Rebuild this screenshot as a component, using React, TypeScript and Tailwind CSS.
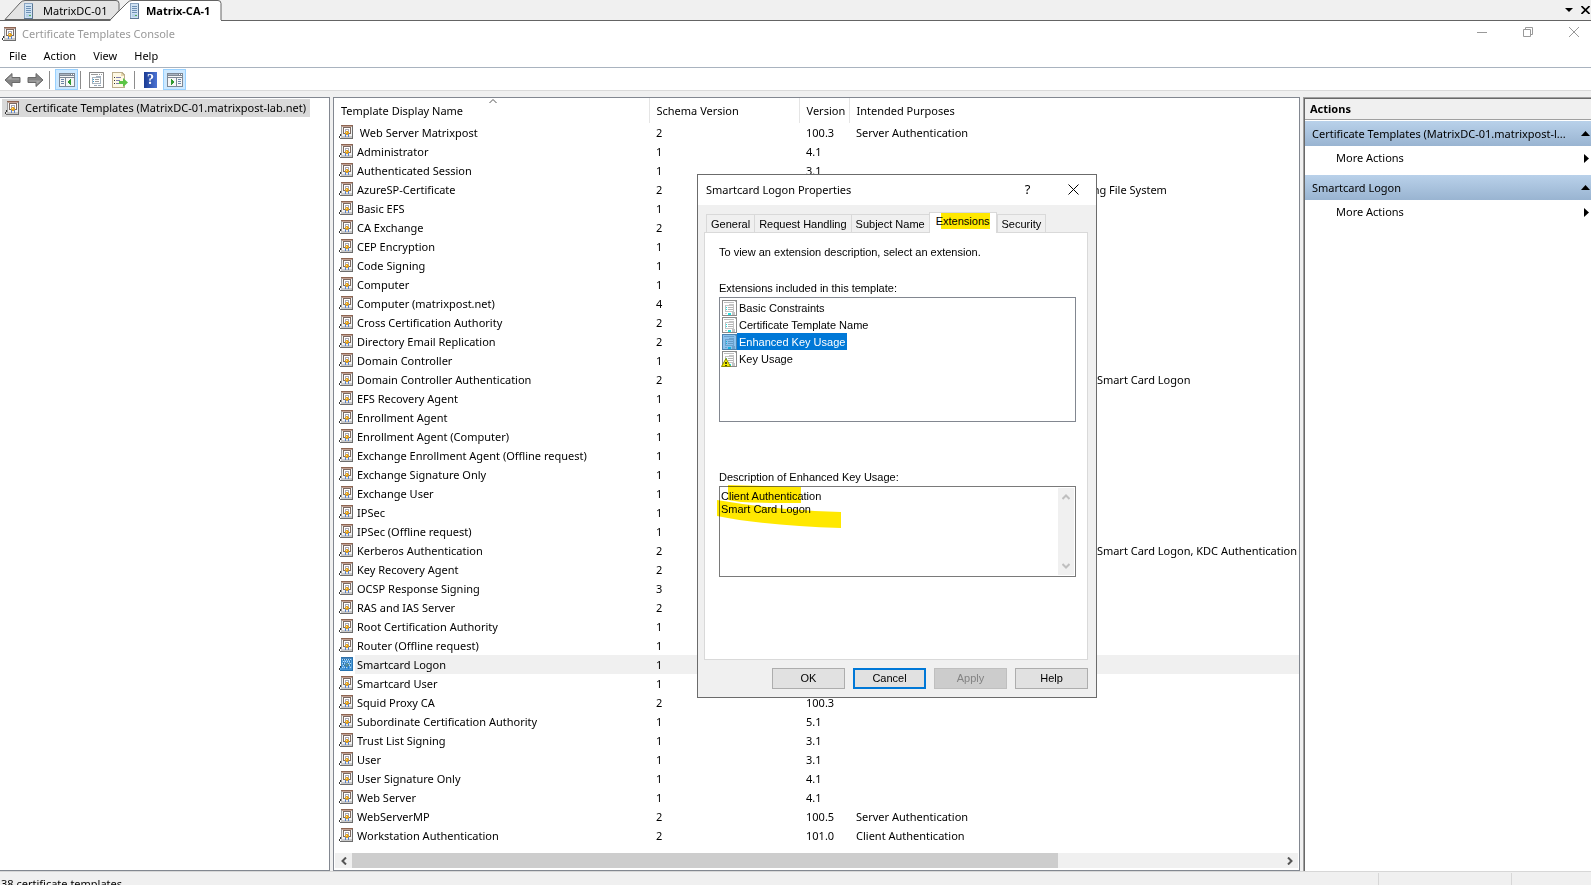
import type { ReactNode } from 'react'

type Template = [name: string, schema: number, version?: string, purposes?: string]

const templates: Template[] = [
  ['\u00a0Web Server Matrixpost', 2, '100.3', 'Server Authentication'],
  ['Administrator', 1, '4.1'],
  ['Authenticated Session', 1, '3.1'],
  ['AzureSP-Certificate', 2, '', 'Client Authentication, Secure Email,\u00a0\u00a0\u00a0 Encrypting File System'],
  ['Basic EFS', 1],
  ['CA Exchange', 2],
  ['CEP Encryption', 1],
  ['Code Signing', 1],
  ['Computer', 1],
  ['Computer (matrixpost.net)', 4],
  ['Cross Certification Authority', 2],
  ['Directory Email Replication', 2],
  ['Domain Controller', 1],
  ['Domain Controller Authentication', 2, '', 'Client Authentication, Server Authentication,\u00a0\u00a0\u00a0 Smart Card Logon'],
  ['EFS Recovery Agent', 1],
  ['Enrollment Agent', 1],
  ['Enrollment Agent (Computer)', 1],
  ['Exchange Enrollment Agent (Offline request)', 1],
  ['Exchange Signature Only', 1],
  ['Exchange User', 1],
  ['IPSec', 1],
  ['IPSec (Offline request)', 1],
  ['Kerberos Authentication', 2, '', 'Client Authentication, Server Authentication,\u00a0\u00a0\u00a0 Smart Card Logon, KDC Authentication'],
  ['Key Recovery Agent', 2],
  ['OCSP Response Signing', 3],
  ['RAS and IAS Server', 2],
  ['Root Certification Authority', 1],
  ['Router (Offline request)', 1],
  ['Smartcard Logon', 1],
  ['Smartcard User', 1],
  ['Squid Proxy CA', 2, '100.3'],
  ['Subordinate Certification Authority', 1, '5.1'],
  ['Trust List Signing', 1, '3.1'],
  ['User', 1, '3.1'],
  ['User Signature Only', 1, '4.1'],
  ['Web Server', 1, '4.1'],
  ['WebServerMP', 2, '100.5', 'Server Authentication'],
  ['Workstation Authentication', 2, '101.0', 'Client Authentication'],
]

const selected = 'Smartcard Logon'

function TemplateIcon({ active = false }: { active?: boolean }) {
  return (
    <svg width="14" height="14" viewBox="0 0 14 14" shapeRendering="crispEdges" className="shrink-0">
      <path d="M2 0h12v14H2z" fill="#9c9c9c" />
      <path d="M2 0h12v1H2z" fill="#8d6552" />
      <path d="M3 1h10v1H3z" fill="#c4a193" />
      <path d="M3 2h10v10H3z" fill="#f1f1f1" />
      <path d="M2 11h11v2H2z" fill="#c9c9c9" />
      <path d="M13 1h1v13h-1zM1 13h13v1H1z" fill="#6c6c6c" />
      <path d="M1 9h1v2H1zM0 11h1v2H0z" fill="#333" />
      <path d="M4 2h8v7H4z" fill="#7b6a62" />
      <path d="M5 3h6v5H5z" fill="#fff" />
      <path d="M6 4h4v3H6z" fill="#a8a8b4" />
      <path d="M7 5h2v1H7z" fill="#fff" />
      <path d="M7 6h2v1h1v2H9v1H7V9H6V7h1z" fill="#e0a020" />
      <path d="M7 7h1v1H7z" fill="#ffe28a" />
      <path d="M6 9h1v3H6zM9 9h1v3H9z" fill="#5b82c8" />
      {active && (
        <>
          <path d="M2 0h12v14H1v-4h1z" fill="#0078d7" opacity=".65" />
          <path d="M3 2h1v1H3zM5 2h1v1H5zM7 2h1v1H7zM9 2h1v1H9zM11 2h1v1h-1zM4 4h1v1H4zM6 4h1v1H6zM8 4h1v1H8zM10 4h1v1h-1zM3 6h1v1H3zM5 6h1v1H5zM9 6h1v1H9zM11 6h1v1h-1zM4 8h1v1H4zM10 8h1v1h-1zM3 10h1v1H3zM5 10h1v1H5zM7 10h1v1H7zM11 10h1v1h-1z" fill="#b8dcf6" />
        </>
      )}
    </svg>
  )
}

function ServerIcon() {
  return (
    <svg width="10" height="16" viewBox="0 0 10 16" shapeRendering="crispEdges" className="shrink-0">
      <path d="M0 0h9v16H0z" fill="#8aa5c2" />
      <path d="M8 1h1v15H0v-1h8z" fill="#5d7893" />
      <path d="M1 1h7v14H1z" fill="#cfe2f3" />
      <path d="M2 3h5v1H2zM2 5h5v1H2zM2 7h5v1H2zM2 9h5v1H2z" fill="#6d90b5" />
      <path d="M2 11h5v3H2z" fill="#b4cfe8" />
      <path d="M5 12h2v1H5z" fill="#4fb04f" />
    </svg>
  )
}

function ArrowIcon({ flip = false }: { flip?: boolean }) {
  return (
    <svg width="17" height="16" viewBox="0 0 17 16" className={flip ? 'rotate-180' : ''}>
      <path d="M1 8l7-6.500v4h8v5H8v4z" fill="#858585" stroke="#6a6a6a" />
      <path d="M3 7.500L7.500 3.500v3H15v1z" fill="#a8a8a8" />
    </svg>
  )
}

function PaneIcon({ right = false }: { right?: boolean }) {
  return (
    <svg width="16" height="14" viewBox="0 0 16 14" shapeRendering="crispEdges">
      <path d="M0 0h16v14H0z" fill="#7d8794" />
      <path d="M1 3h14v1H1zM1 5h14v8H1z" fill="#f6f6f6" />
      <path d="M1 1h10v1H1z" fill="#aab4c0" />
      <path d="M12 1h1v1h-1zM14 1h1v1h-1z" fill="#fff" />
      {right ? (
        <>
          <path d="M9 5h1v8H9z" fill="#7d8794" />
          <path d="M11 6h3v1h-3zM11 8h3v1h-3zM11 10h3v1h-3z" fill="#6d86a8" />
          <path d="M4 6h1v1h1v1h1v2H6v1H5v1H4z" fill="#2f9a2f" />
        </>
      ) : (
        <>
          <path d="M6 5h1v8H6z" fill="#7d8794" />
          <path d="M2 6h3v1H2zM2 8h3v1H2zM2 10h3v1H2z" fill="#6d86a8" />
          <path d="M12 6h-1v1h-1v1H9v2h1v1h1v1h1z" fill="#2f9a2f" />
        </>
      )}
    </svg>
  )
}

function PropertiesIcon() {
  return (
    <svg width="15" height="16" viewBox="0 0 15 16" shapeRendering="crispEdges">
      <path d="M0 0h15v16H0z" fill="#8b8b8b" />
      <path d="M1 1h13v14H1z" fill="#fff" />
      <path d="M2 2h7v1H2zM10 2h1v1h-1zM12 2h1v1h-1z" fill="#9a9a9a" />
      <path d="M3 5h4V4h5v8H3z" fill="#a7b3bf" />
      <path d="M4 6h7v5H4z" fill="#fff" />
      <path d="M4 7h1v1H4zM4 9h1v1H4z" fill="#2e9fd0" />
      <path d="M6 7h4v1H6zM6 9h4v1H6z" fill="#9a9a9a" />
      <path d="M5 13h3v1H5zM9 13h3v1H9z" fill="#9aa9b8" />
    </svg>
  )
}

function ExportIcon() {
  return (
    <svg width="16" height="16" viewBox="0 0 16 16" shapeRendering="crispEdges">
      <path d="M0 0h10l3 3v13H0z" fill="#bcae8c" />
      <path d="M1 1h8v3h3v11H1z" fill="#fff9e4" />
      <path d="M9 1l3 3H9z" fill="#e6d8ae" />
      <path d="M2 5h1v1H2zM2 8h1v1H2zM2 11h1v1H2z" fill="#333" />
      <path d="M4 5h5v1H4zM4 8h4v1H4zM4 11h3v1H4z" fill="#7d7db0" />
      <path d="M7 9h4V6l5 4.500-5 4.500v-3H7z" fill="#5cc545" shapeRendering="auto" />
    </svg>
  )
}

function ExtensionIcon({ active = false, warning = false }: { active?: boolean; warning?: boolean }) {
  return (
    <svg width="16" height="16" viewBox="0 0 16 16" shapeRendering="crispEdges" className="shrink-0">
      <path d="M1 0h15v16H1z" fill="#8a8a8a" />
      <path d="M2 1h13v14H2z" fill="#fff" />
      <path d="M14 1h1v1h-1zM3 2h10v1H3z" fill="#c0c0c0" />
      <path d="M4 5h4V4h5v8H4z" fill="#c4c4c4" />
      <path d="M5 6h7v5H5z" fill="#fff" />
      <path d="M7 7h5v1H7zM7 9h5v1H7z" fill="#b4b4b4" />
      <path d="M5 7h1v1H5zM5 9h1v1H5zM7 13h3v2H7z" fill="#20e0e0" />
      <path d="M4 13h2v1H4zM11 12h3v3h-3z" fill="#c4c4c4" />
      {active && <path d="M1 0h15v16H1z" fill="#0078d7" opacity=".45" />}
      {warning && (
        <>
          <path d="M5 7.500L9.500 15.500H.5z" fill="#f4ec00" stroke="#8c8c00" shapeRendering="auto" />
          <path d="M4 11h2v2H4zM4 14h2v1H4z" fill="#4a4a00" />
        </>
      )}
    </svg>
  )
}

function SideHeading({ children }: { children: ReactNode }) {
  return (
    <button type="button" className="flex h-[25px] w-full items-center justify-between bg-linear-to-b from-[#b9d1ea] to-[#99b4d1] pl-[7px] pr-px text-left">
      <span className="truncate">{children}</span>
      <svg width="9" height="5" viewBox="0 0 9 5" className="ml-2 shrink-0"><path d="M4.500 0L9 5H0z" /></svg>
    </button>
  )
}

function MoreActions() {
  return (
    <button type="button" className="flex h-6 w-full items-center justify-between pl-[31px] pr-[2px] text-left">
      More Actions
      <svg width="5" height="9" viewBox="0 0 5 9"><path d="M0 0l5 4.500L0 9z" /></svg>
    </button>
  )
}

function DialogTab({ children }: { children: ReactNode }) {
  return (
    <button type="button" role="tab" className="h-[18px] border-l border-t border-[#d9d9d9] px-1 pt-px last:border-r">
      {children}
    </button>
  )
}

function ExtensionItem({ label, active = false, warning = false }: { label: string; active?: boolean; warning?: boolean }) {
  return (
    <li role="option" aria-selected={active} className="flex h-[17px] items-center">
      <ExtensionIcon active={active} warning={warning} />
      <span className={`px-[2px] pb-px pt-[3px] ${active ? 'bg-[#0078d7] text-white' : ''}`}>{label}</span>
    </li>
  )
}

const dialogButton = 'h-[21px] w-[73px] border'

function PropertiesDialog() {
  return (
    <section
      role="dialog"
      aria-label="Smartcard Logon Properties"
      className="absolute left-[697px] top-[174px] w-[400px] border border-[#6b6b6b] bg-[#f0f0f0] font-['Liberation_Sans',Arial,sans-serif] text-[11px] leading-[13px]"
    >
      <header className="flex h-[30px] items-center bg-white pb-[2px] pl-2 font-['Noto_Sans',sans-serif] text-[11px]">
        <h2 className="flex-1">Smartcard Logon Properties</h2>
        <button type="button" aria-label="Help" className="w-[45px] text-[13px]">?</button>
        <button type="button" aria-label="Close" className="flex w-[46px] justify-center">
          <svg width="11" height="11" viewBox="0 0 11 11"><path d="M.5.5l10 10M10.500.5l-10 10" stroke="#000" /></svg>
        </button>
      </header>

      <div className="pb-2 pl-[6px] pr-2 pt-[7px]">
        <div role="tablist" className="flex h-5 items-end px-[2px]">
          <DialogTab>General</DialogTab>
          <DialogTab>Request Handling</DialogTab>
          <DialogTab>Subject Name</DialogTab>
          <button
            type="button"
            role="tab"
            aria-selected="true"
            className="relative z-10 -mb-px h-[21px] border-x border-t border-[#d9d9d9] bg-white px-[6px] pb-[3px]"
          >
            <span className="bg-[linear-gradient(90deg,transparent_5px,#ffe800_5px)] py-[2px]">Extensions</span>
          </button>
          <DialogTab>Security</DialogTab>
        </div>

        <div className="border border-[#d9d9d9] bg-white pb-[82px] pl-[14px] pr-[11px] pt-[13px]">
          <p>To view an extension description, select an extension.</p>
          <p className="mt-[23px]">Extensions included in this template:</p>
          <ul role="listbox" aria-label="Extensions" className="mt-[2px] h-[125px] border border-[#828790] p-px">
            <ExtensionItem label="Basic Constraints" />
            <ExtensionItem label="Certificate Template Name" />
            <ExtensionItem label="Enhanced Key Usage" active />
            <ExtensionItem label="Key Usage" warning />
          </ul>

          <label htmlFor="description" className="mt-[49px] block">Description of Enhanced Key Usage:</label>
          <div className="relative mt-[2px] flex h-[91px] border border-[#7a7a7a] p-px">
            <textarea
              id="description"
              readOnly
              defaultValue={'Client Authentication\nSmart Card Logon'}
              className="flex-1 resize-none overflow-hidden bg-transparent py-[2px] outline-none"
            />
            <div className="flex w-4 flex-col items-center justify-between bg-[#f0f0f0] py-[6px]">
              <svg width="8" height="6" viewBox="0 0 8 6"><path d="M.5 5L4 1.500 7.500 5" fill="none" stroke="#bfbfbf" strokeWidth="2" /></svg>
              <svg width="8" height="6" viewBox="0 0 8 6"><path d="M.5 1L4 4.500 7.500 1" fill="none" stroke="#bfbfbf" strokeWidth="2" /></svg>
            </div>
            {/* marker strokes over the description */}
            <svg width="126" height="45" viewBox="0 0 126 45" className="pointer-events-none absolute -left-[3px] -top-[2px] mix-blend-multiply">
              <path d="M11 0l73 2v16q-37 0-60-1l-13-2z" fill="#ffe800" />
              <path d="M0 15q58 10 124 12v16Q50 41 0 31z" fill="#ffe800" />
            </svg>
          </div>
        </div>

        <div className="mt-2 flex justify-end gap-2">
          <button type="button" className={`${dialogButton} border-[#adadad] bg-[#e1e1e1]`}>OK</button>
          <button type="button" className={`${dialogButton} border-[#0078d7] bg-[#e1e1e1] ring-1 ring-inset ring-[#0078d7]`}>Cancel</button>
          <button type="button" disabled className={`${dialogButton} border-[#bfbfbf] bg-[#cccccc] text-[#838383]`}>Apply</button>
          <button type="button" className={`${dialogButton} border-[#adadad] bg-[#e1e1e1]`}>Help</button>
        </div>
      </div>
    </section>
  )
}

export default function App() {
  return (
    <div className="relative flex h-screen flex-col overflow-hidden bg-[#f0f0f0] font-['Noto_Sans',sans-serif] text-[11px] leading-4 text-black">

      {/* Session tabs */}
      <div className="flex h-[21px] shrink-0 items-end border-b border-[#646464]">
        <div className="relative flex h-5 flex-1">
          <svg width="223" height="21" viewBox="0 0 223 21" className="absolute left-0 top-0">
            <path d="M5 19.500L20 3q2-2.500 5-2.500h91q3 0 3 3v7L111 19.500z" fill="#e3e3e3" stroke="#646464" />
            <path d="M110 21l17-18q2-2.500 5-2.500h86q3 0 3 3V21z" fill="#fff" />
            <path d="M110.500 19.500L127 3q2-2.500 5-2.500h86q3 0 3 3V20" fill="none" stroke="#646464" />
          </svg>
          <button type="button" className="relative ml-6 flex w-[106px] items-center gap-[9px] pt-px"><ServerIcon />MatrixDC-01</button>
          <button type="button" className="relative flex items-center gap-[6px] pt-px font-bold"><ServerIcon />Matrix-CA-1</button>
        </div>
        <div className="flex items-center gap-2 pb-[6px] pr-px">
          <svg width="8" height="4" viewBox="0 0 8 4"><path d="M0 0h8L4 4z" /></svg>
          <svg width="9" height="8" viewBox="0 0 9 8"><path d="M.5 0l8 8M8.500 0l-8 8" stroke="#000" strokeWidth="1.600" /></svg>
        </div>
      </div>

      {/* Title bar */}
      <header className="flex h-[25px] shrink-0 items-center bg-white pl-[2px] pr-3 text-[#999]">
        <TemplateIcon />
        <h1 className="ml-[6px] flex-1">Certificate Templates Console</h1>
        <div className="flex gap-9 pb-[3px]">
          <button type="button" aria-label="Minimize">
            <svg width="10" height="10" viewBox="0 0 10 10"><path d="M0 5.500h10" stroke="#999" /></svg>
          </button>
          <button type="button" aria-label="Restore">
            <svg width="10" height="10" viewBox="0 0 10 10"><path d="M.5 2.500h7v7h-7zM2.500 2.500v-2h7v7h-2" fill="none" stroke="#999" /></svg>
          </button>
          <button type="button" aria-label="Close">
            <svg width="10" height="10" viewBox="0 0 10 10"><path d="M0 0l10 10M10 0L0 10" stroke="#999" /></svg>
          </button>
        </div>
      </header>

      {/* Menu */}
      <nav className="flex h-[22px] shrink-0 items-center gap-[17px] border-b border-[#a9b3bf] bg-white px-[9px] pb-px">
        <button type="button">File</button>
        <button type="button">Action</button>
        <button type="button">View</button>
        <button type="button">Help</button>
      </nav>

      {/* Toolbar */}
      <div className="flex h-[23px] shrink-0 items-center border-b border-[#dadada] bg-white pl-1 pt-px">
        <button type="button" aria-label="Back"><ArrowIcon /></button>
        <button type="button" aria-label="Forward" className="ml-[6px]"><ArrowIcon flip /></button>
        <span className="mx-[5px] h-[18px] w-px bg-[#8c8c8c]" />
        <button type="button" aria-label="Console tree" className="flex h-[21px] w-[23px] items-center justify-center border border-[#99d1ff] bg-[#cce8ff]"><PaneIcon /></button>
        <span className="ml-[2px] mr-2 h-[18px] w-px bg-[#8c8c8c]" />
        <button type="button" aria-label="Properties"><PropertiesIcon /></button>
        <button type="button" aria-label="Export list" className="ml-2"><ExportIcon /></button>
        <span className="ml-[6px] mr-[9px] h-[18px] w-px bg-[#8c8c8c]" />
        <button type="button" aria-label="Help" className="h-4 w-[13px] bg-linear-to-r from-[#1c3c94] to-[#4c74d4] font-['Liberation_Serif',serif] text-[14px] font-bold text-white">?</button>
        <button type="button" aria-label="Action pane" className="ml-[6px] flex h-[21px] w-[23px] items-center justify-center border border-[#99d1ff] bg-[#cce8ff]"><PaneIcon right /></button>
      </div>

      <main className="flex min-h-0 flex-1 gap-[3px] pt-[6px]">
        {/* Console tree */}
        <aside className="w-[330px] shrink-0 border-y border-r border-[#828790] bg-white pl-[2px] pt-px">
          <a href="#templates" className="inline-flex h-[18px] items-center gap-[6px] bg-[#d9d9d9] pl-[3px] pr-1">
            <TemplateIcon />
            Certificate Templates (MatrixDC-01.matrixpost-lab.net)
          </a>
        </aside>

        {/* Template list */}
        <div id="templates" className="flex min-w-0 flex-1 flex-col border border-[#828790] bg-white">
          <div className="min-h-0 flex-1 overflow-hidden">
            <table className="w-full table-fixed border-collapse text-left">
              <colgroup>
                <col className="w-[315px]" />
                <col className="w-[150px]" />
                <col className="w-[50px]" />
                <col />
              </colgroup>
              <thead>
                <tr className="h-[25px]">
                  <th className="relative border-r border-[#e5e5e5] p-0 pl-[7px] font-normal">
                    Template Display Name
                    <svg width="8" height="5" viewBox="0 0 8 5" className="absolute left-[155px] top-px"><path d="M.5 4L4 .5 7.500 4" fill="none" stroke="#555" /></svg>
                  </th>
                  <th className="border-r border-[#e5e5e5] p-0 pl-[7px] font-normal">Schema Version</th>
                  <th className="border-r border-[#e5e5e5] p-0 pl-[7px] font-normal">Version</th>
                  <th className="p-0 pl-[7px] font-normal">Intended Purposes</th>
                </tr>
              </thead>
              <tbody>
                {templates.map(([name, schema, version, purposes]) => (
                  <tr key={name} className={name === selected ? 'h-[19px] bg-[linear-gradient(90deg,white_21px,#f0f0f0_21px)]' : 'h-[19px]'}>
                    <td className="p-0 pl-[5px]">
                      <span className="flex items-start gap-1 whitespace-nowrap">
                        <TemplateIcon active={name === selected} />
                        {name}
                      </span>
                    </td>
                    <td className="p-0 pl-[7px]">{schema}</td>
                    <td className="p-0 pl-[7px]">{version}</td>
                    <td className="overflow-hidden whitespace-nowrap p-0 pl-[7px]">{purposes}</td>
                  </tr>
                ))}
              </tbody>
            </table>
          </div>
          <div className="mx-px mb-[2px] flex h-[15px] shrink-0 items-center bg-[#f0f0f0]">
            <button type="button" aria-label="Scroll left" className="flex w-[17px] justify-center">
              <svg width="6" height="8" viewBox="0 0 6 8"><path d="M5 .5L1.500 4 5 7.500" fill="none" stroke="#555" strokeWidth="2" /></svg>
            </button>
            <div className="h-full flex-1"><div className="h-full w-[76%] bg-[#cdcdcd]" /></div>
            <button type="button" aria-label="Scroll right" className="flex w-[17px] justify-center">
              <svg width="6" height="8" viewBox="0 0 6 8"><path d="M1 .5L4.500 4 1 7.500" fill="none" stroke="#555" strokeWidth="2" /></svg>
            </button>
          </div>
        </div>

        {/* Actions pane */}
        <aside className="w-[288px] shrink-0 border-l border-t border-[#a0a0a0] bg-white pl-px pt-px shadow-[inset_1px_1px_0_#696969]">
          <h2 className="mb-px h-[21px] border-b border-[#a0a0a0] bg-[#f0f0f0] pl-[5px] pt-[2px] font-bold">Actions</h2>
          <SideHeading>Certificate Templates (MatrixDC-01.matrixpost-l...</SideHeading>
          <div className="pb-[5px]"><MoreActions /></div>
          <SideHeading>Smartcard Logon</SideHeading>
          <MoreActions />
        </aside>
      </main>

      {/* Status bar */}
      <footer className="flex h-[14px] shrink-0 overflow-hidden border-t border-[#d7d7d7] pl-px">
        <span className="flex-1 pt-1">38 certificate templates</span>
        <span className="mt-px w-[133px] border-l border-[#d7d7d7]" />
        <span className="mt-px w-[80px] border-l border-[#d7d7d7]" />
      </footer>

      <PropertiesDialog />
    </div>
  )
}
